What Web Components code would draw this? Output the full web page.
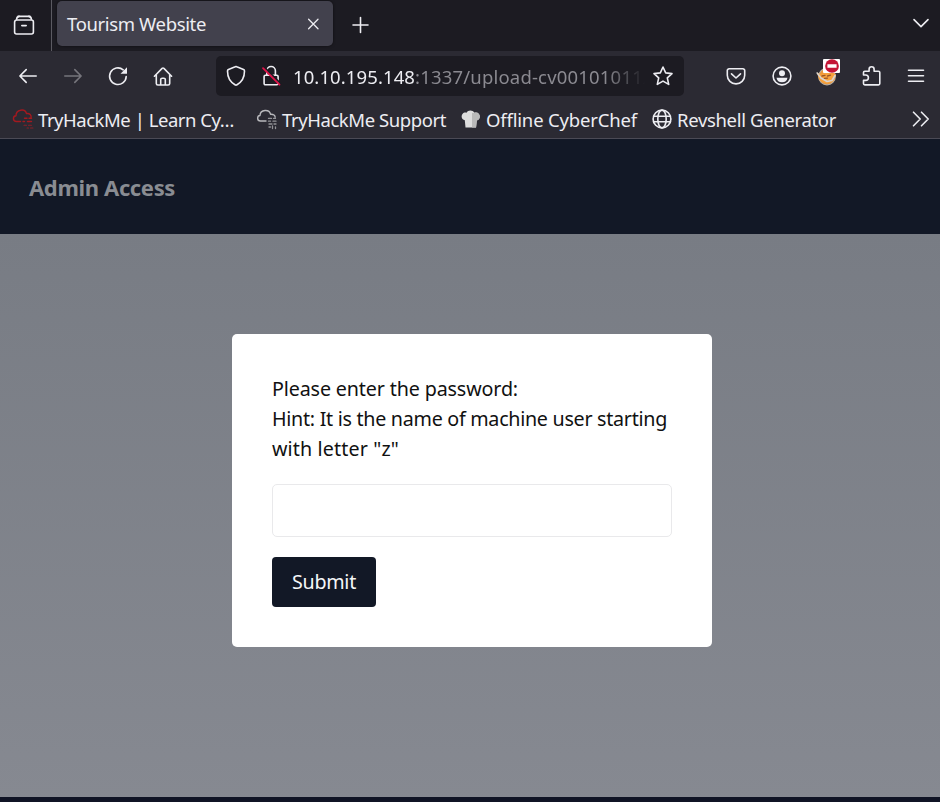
<!DOCTYPE html>
<html lang="en">
<head>
<meta charset="utf-8">
<title>Tourism Website</title>
<style>
html,body{margin:0;height:100%;overflow:hidden;background:#1c1b22}
body{font-family:"Noto Sans","Open Sans",sans-serif}
</style>
</head>
<body>
<browser-window></browser-window>
<script>
const ICONS = {
  view: '<path d="M5 2.4h12M3.6 6h14.8a2 2 0 0 1 2 2v10a2 2 0 0 1-2 2H3.6a2 2 0 0 1-2-2V8a2 2 0 0 1 2-2z M8.8 11.6h4.4"/><path d="M3.6 5.2a3 3 0 0 1 2.6-2.8M18.4 5.2a3 3 0 0 0-2.6-2.8"/>',
  close: '<path stroke-width="1.3" d="M6.6 6.3l9.4 9.4M16 6.3l-9.4 9.4"/>',
  plus: '<path d="M11.500 3.5v15M4 11h15"/>',
  chevron: '<path d="M4 7.6l7 7 7-7"/>',
  back: '<path d="M19.2 11H3M9.2 4.600L2.9 11l6.300 6.400"/>',
  forward: '<path d="M2.8 11H19M12.800 4.600l6.300 6.400-6.300 6.400"/>',
  reload: '<path d="M19.2 11.5a8.3 8.3 0 1 1-3-6.700"/><path d="M20 2.200v6.500h-6.500z" fill="currentColor" stroke="none"/>',
  home: '<path d="M2.4 11.2l7.7-7.8q.9-.8 1.8 0l7.7 7.8M4.3 9.8v8.6a1.6 1.6 0 0 0 1.6 1.6h10.2a1.6 1.6 0 0 0 1.6-1.6V9.8M8.7 19.8v-5.2a1.4 1.4 0 0 1 1.4-1.4h1.8a1.4 1.4 0 0 1 1.4 1.4v5.2"/>',
  shield: '<path d="M10.200 1.800q.8-.4 1.600 0l6.700 2.800q1 .4 1 1.500c0 5.300-2.200 10.700-7.500 13.700q-1 .6-2 0C4.700 16.800 2.500 11.400 2.500 6.100q0-1.100 1-1.500z"/>',
  lock: '<path d="M6.8 9.800V5.800a4.300 4.300 0 0 1 8.600 0V10M5.400 10.200h11.400a1.300 1.300 0 0 1 1.300 1.300v7a1.300 1.300 0 0 1-1.300 1.300H5.400a1.300 1.300 0 0 1-1.300-1.300v-7a1.300 1.300 0 0 1 1.300-1.300z"/><path stroke="#1c1b22" stroke-width="1.800" d="M4.500 2.500l16.500 16.500"/><path stroke="#e0144a" stroke-width="1.800" d="M3 3.200l16.500 16.500"/>',
  star: '<path d="M11 2l2.700 5.900 6.300.7-4.700 4.300 1.400 6.500-5.700-3.300-5.700 3.300 1.400-6.500L2 8.600l6.300-.7z"/>',
  pocket: '<path d="M4.100 3.800h13.800a1.800 1.800 0 0 1 1.800 1.800v4.600a8.700 8.700 0 0 1-17.400 0V5.600a1.800 1.800 0 0 1 1.800-1.800z"/><path d="M6.500 8.800l4.500 4.200 4.500-4.200"/>',
  account: '<circle cx="11" cy="11" r="8.900"/><circle cx="11" cy="8.300" r="3" fill="currentColor" stroke="none"/><path d="M5.500 12.800h11q-.8 4.500-5.500 4.500T5.500 12.800z" fill="currentColor" stroke="none"/>',
  fox: '<circle cx="11" cy="11.500" r="8.300" fill="#ee9838" stroke="#bcae9f" stroke-width="1.200"/><path d="M1 7.500l4 2 5-2 7 0 3 2-2 6-6 3-6-1-3-3z" fill="#f7a13c" stroke="none"/><path d="M1.200 8l3.800 5 6 3.500 5-1 3-5" stroke="#d9d4d0" stroke-width="1.600"/><path d="M6 11l3-.7M11.500 11l3-.8M8.500 13.300l3-.2" stroke="#9b5726" stroke-width="1.300"/>',
  block: '<circle cx="11" cy="11" r="10.800" fill="#c41536" stroke="none"/><path d="M3.800 8.300h14.400v5.400H3.800z" fill="#fff" stroke="none"/>',
  puzzle: '<path d="M2.500 18.600V15.400h2.200a2.700 2.700 0 0 0 0-5.400H2.500V7.600a1.300 1.300 0 0 1 1.300-1.300h4.300V4.200a2.500 2.500 0 0 1 5 0v2.100h4.400a1.300 1.300 0 0 1 1.300 1.300v11a1.300 1.300 0 0 1-1.300 1.300H3.800A1.300 1.300 0 0 1 2.500 18.600z"/>',
  menu: '<path d="M3.500 5.200h15M3.500 10.700h15M3.500 16.200h15"/>',
  more: '<path d="M3.500 4.200l6.700 6.800-6.700 6.800M11.500 4.200l6.700 6.800-6.700 6.800"/>',
  cloudRed: '<g stroke="#a3191f" stroke-width="1.400"><path d="M8.500 13.500H4.500C.5 13.500.5 8 4 7.700 4 1.500 13 0 14.500 5.600c3.300-.5 5 1.600 4.600 4.200M12.500 10.300h2.500M17 10.300h2.500M11 13.500h1.500M15.500 13.500h4"/><path stroke-width="1.100" stroke="#8a2027" d="M12 17.300h2.500M16.500 17.300h3M15 20h1.500M18.500 20h2.500"/></g>',
  cloudGray: '<g stroke="#b9b9bd" stroke-width="1.400"><path d="M10 13H4.500C.8 13 .8 7.800 4 7.500 4.300 1 13.500 1 14.500 6.200c3-.2 4.800 1.300 4.600 3"/><path stroke-width="1.300" stroke="#929297" d="M12.500 10.400h3M17.500 10.400h2M12.500 13.200h2M17 13.200h3M13 16h3M18 16h2M13 19h1.500M16.500 18v2.500M19.500 19v1.500"/></g>',
  chef: '<path d="M5.500 19.500l-.7-7.300C1.500 11.500.9 8 2.500 6c1-1.500 3-1.700 4-1.200 1.500-2.900 6-3 8 0 3-1 5.400 1 5.300 4-.1 2-1.400 3.200-3 3.600l-.7 7.100z" fill="#ddd" stroke="none"/><path d="M12 5v14.500h4l.8-7.100c3-.5 4-4 2-6.400Q17 4 14.500 4.800z" fill="#b9b9b9" stroke="none"/>',
  globe: '<circle cx="11" cy="11" r="8.900"/><ellipse cx="11" cy="11" rx="4.200" ry="8.900"/><path d="M2.500 8.300h17M2.500 13.800h17"/>'
};

const define = (name, html, setup) => customElements.define(name, class extends HTMLElement {
  connectedCallback() {
    if (this.shadowRoot) return;
    const t = document.createElement('template');
    t.innerHTML = html;
    this.attachShadow({mode: 'open'}).append(t.content.cloneNode(true));
    if (setup) setup(this, this.shadowRoot);
  }
});

define('ui-icon', `<style>:host{display:block;flex:none;width:22px;height:22px}svg{display:block;width:100%;height:100%}</style>
<svg viewBox="0 0 22 22" fill="none" stroke="currentColor" stroke-width="1.6" stroke-linecap="round" stroke-linejoin="round"></svg>`,
(host, root) => { root.querySelector('svg').innerHTML = ICONS[host.getAttribute('name')]; });

// A single line of text whose tracking is adjusted to fill a given measure.
define('ui-text', `<style>:host{display:block;flex:none;white-space:pre}span{display:inline-block}</style><span></span>`,
(host, root) => {
  const span = root.querySelector('span');
  span.textContent = host.getAttribute('text');
  const w = +host.getAttribute('measure');
  if (w) {
    host.style.width = w + 'px';
    span.style.letterSpacing = (w - span.getBoundingClientRect().width) / span.textContent.length + 'px';
  }
});

define('tab-strip', `<style>
:host{display:flex;height:51px;background:#1c1b22;color:#ededf2;font-size:18.5px;box-sizing:border-box}
.view{border-right:1px solid #5b5a62;display:grid;place-items:center;padding:0 4px 2px 0;width:47px}
.tab{margin:1px 0 0 5px;width:276px;height:45px;border-radius:5px;background:#42414d;box-shadow:0 0 3px #0008;display:flex;align-items:center;justify-content:space-between;padding:0 9px 0 10px;box-sizing:border-box}
.plus{margin:14px 0 0 16px}.list{margin:12px 8px 0 auto}
</style>
<div class="view"><ui-icon name="view"></ui-icon></div>
<div class="tab"><ui-text text="Tourism Website" measure="139"></ui-text><ui-icon name="close"></ui-icon></div>
<ui-icon class="plus" name="plus"></ui-icon><ui-icon class="list" name="chevron"></ui-icon>`);

define('address-bar', `<style>
:host{display:flex;align-items:center;box-sizing:border-box;width:468px;height:40px;border-radius:5px;background:#1c1b22;padding:0 10px 0 9px;font-size:18.5px}
.lock{margin:0 11px 0 13px}
.url{display:flex;width:359px;-webkit-mask-image:linear-gradient(90deg,#000 312px,transparent 352px);mask-image:linear-gradient(90deg,#000 312px,transparent 352px)}
.path{color:#8b8a91}
</style>
<ui-icon name="shield"></ui-icon><ui-icon class="lock" name="lock"></ui-icon>
<div class="url"><ui-text text="10.10.195.148" measure="122"></ui-text><ui-text class="path" text=":1337/upload-cv00101011/" measure="235"></ui-text></div>
<ui-icon name="star"></ui-icon>`);

define('nav-bar', `<style>
:host{display:flex;height:50px;align-items:center;background:#2b2a33;color:#ededf2;padding:0 13px 0 17px;box-sizing:border-box}
.nav,.tools{display:flex;gap:23px}.off{color:#76757c}address-bar{margin-left:42px}.tools{margin-left:auto}
.tools ui-icon[name=account],.tools ui-icon[name=puzzle]{padding-left:1px;margin-right:-1px}
.ext{position:relative;padding-left:1px;margin-right:-1px}
.badge{position:absolute;width:17px;height:14px;left:8px;top:-6px;background:#fff;overflow:hidden;border-radius:1px}
.badge ui-icon{width:14px;height:14px;margin:-.500px 0 0 1.500px}
</style>
<div class="nav"><ui-icon name="back"></ui-icon><ui-icon class="off" name="forward"></ui-icon><ui-icon name="reload"></ui-icon><ui-icon name="home"></ui-icon></div>
<address-bar></address-bar>
<div class="tools"><ui-icon name="pocket"></ui-icon><ui-icon name="account"></ui-icon><div class="ext"><ui-icon name="fox"></ui-icon><div class="badge"><ui-icon name="block"></ui-icon></div></div><ui-icon name="puzzle"></ui-icon><ui-icon name="menu"></ui-icon></div>`);

define('book-mark', `<style>:host{display:flex;align-items:center;gap:4px}</style><ui-icon></ui-icon><ui-text></ui-text>`,
(host, root) => {
  const icon = document.createElement('ui-icon'), text = document.createElement('ui-text');
  icon.setAttribute('name', host.getAttribute('icon'));
  text.setAttribute('text', host.getAttribute('label'));
  text.setAttribute('measure', host.getAttribute('measure'));
  root.querySelector('ui-icon').replaceWith(icon);
  root.querySelector('ui-text').replaceWith(text);
});

define('bookmark-bar', `<style>
:host{display:flex;height:37px;box-sizing:border-box;padding:0 8px 1px 12px;align-items:center;background:#2b2a33;color:#ededf2;font-size:18.5px}
.more{margin-left:auto}.b{margin-left:22px}.c,.d{margin-left:14px}
</style>
<book-mark icon="cloudRed" label="TryHackMe | Learn Cy…" measure="196"></book-mark>
<book-mark class="b" icon="cloudGray" label="TryHackMe Support" measure="164"></book-mark>
<book-mark class="c" icon="chef" label="Offline CyberChef" measure="151"></book-mark>
<book-mark class="d" icon="globe" label="Revshell Generator" measure="159"></book-mark>
<ui-icon class="more" name="more"></ui-icon>`);

define('site-header', `<style>
:host{display:flex;align-items:center;height:96px;box-sizing:border-box;border-top:1px solid #4b4a55;background:#121826;color:#898c92;padding:0 29px;font-size:22px;font-weight:700}
</style><ui-text text="Admin Access" measure="146"></ui-text>`);

define('password-card', `<style>
:host{display:block;box-sizing:border-box;width:480px;height:313px;padding:40px;border-radius:5px;background:#fff;color:#111;font-size:19.700px;line-height:30px}
input{display:block;box-sizing:border-box;width:400px;height:53px;margin:20px 0;border:1.500px solid #e9e9eb;border-radius:5px;background:#fff;padding:0 12px}
button{display:grid;place-items:center;width:104px;height:50px;padding:0;border:0;border-radius:4px;background:#121826;color:#f5f6f8;font:inherit}
</style>
<ui-text text="Please enter the password:" measure="246"></ui-text>
<ui-text text="Hint: It is the name of machine user starting" measure="395"></ui-text>
<ui-text text='with letter "z"' measure="127"></ui-text>
<input type="password" aria-label="Password"><button><ui-text text="Submit" measure="64"></ui-text></button>`);

define('browser-window', `<style>
:host{display:flex;flex-direction:column;width:940px;height:802px}
main{flex:none;height:563px;box-sizing:border-box;padding:100px 0 0 232px;background:linear-gradient(#787c84,#868991)}
footer{flex:1;background:#101425}
</style>
<tab-strip></tab-strip><nav-bar></nav-bar><bookmark-bar></bookmark-bar><site-header></site-header>
<main><password-card></password-card></main><footer></footer>`);
</script>
</body>
</html>
